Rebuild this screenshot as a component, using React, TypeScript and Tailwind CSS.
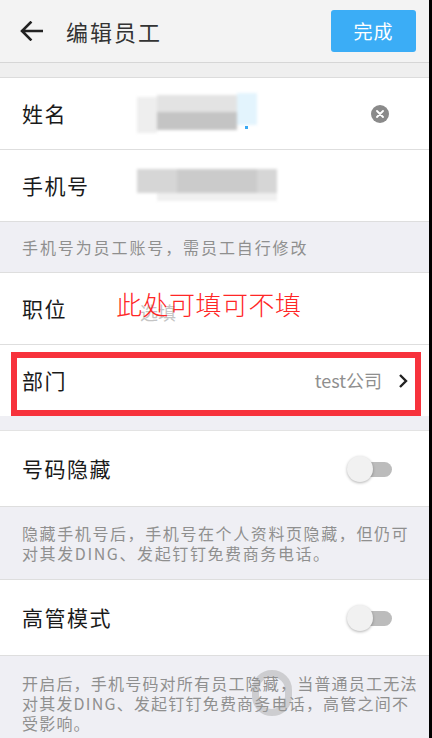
import React from "react";

const font = { fontFamily: '"Noto Sans CJK SC", "Noto Sans", sans-serif' };

function Toggle() {
  return (
    <div className="relative mr-[36px] h-[28px] w-[46px]">
      <div className="absolute left-[14px] top-[7px] h-[15px] w-[31px] rounded-full bg-[#bcbcbc]" />
      <div className="absolute left-0 top-[1px] h-[26px] w-[26px] rounded-full bg-[#f1f1f1] shadow-[0_1px_3px_rgba(0,0,0,0.3)]" />
    </div>
  );
}

export default function App() {
  return (
    <div className="w-[432px] h-[738px] overflow-hidden bg-[#efeff4] border-r-[3px] border-black" style={font}>
      {/* Header */}
      <div className="flex h-[63px] items-center bg-[#f3f3f3] border-b border-[#d6d6d6]">
        <svg className="ml-[20px]" width="23" height="20" viewBox="0 0 23 20" fill="none">
          <path d="M22 10H2.5M10.5 1.5L2 10l8.5 8.5" stroke="#222" strokeWidth="2.6" strokeLinecap="square" />
        </svg>
        <div className="ml-[23px] text-[22px] tracking-[2px] text-[#333]">编辑员工</div>
        <div className="ml-auto mr-[13px] flex h-[42px] w-[85px] items-center justify-center rounded-[3px] bg-[#3badf6] text-[19px] tracking-[1px] text-white">
          完成
        </div>
      </div>
      <div className="h-[15px] bg-[#efefef] border-b border-[#dcdcdc]" />

      {/* Name */}
      <div className="flex h-[72px] items-center bg-white border-b border-[#dedede]">
        <div className="w-[137px] pl-[22px] text-[21px] tracking-[1.5px] text-[#1a1a1a]">姓名</div>
        <div className="relative h-[38px] w-[120px] blur-[1.5px]">
          <div className="absolute left-0 top-[2px] h-[36px] w-[20px] bg-[#eeeeee]" />
          <div className="absolute left-[20px] top-[0px] h-[18px] w-[80px] bg-[#e3e3e3]" />
          <div className="absolute left-[20px] top-[17px] h-[18px] w-[80px] bg-[#c4c4c4]" />
          <div className="absolute left-[100px] top-[-2px] h-[32px] w-[20px] bg-[#e3f4fd]" />
        </div>
        <div className="relative -ml-[12px] mt-[28px] h-[3px] w-[3px] bg-[#39a9f4]" />
        <div className="ml-auto mr-[40px] flex h-[18px] w-[18px] items-center justify-center rounded-full bg-[#8a8a8a]">
          <svg width="8" height="8" viewBox="0 0 8 8">
            <path d="M1 1l6 6M7 1L1 7" stroke="white" strokeWidth="1.8" strokeLinecap="round" />
          </svg>
        </div>
      </div>

      {/* Phone */}
      <div className="flex h-[72px] items-center bg-white border-b border-[#dedede]">
        <div className="w-[137px] pl-[22px] text-[21px] tracking-[1.5px] text-[#1a1a1a]">手机号</div>
        <div className="relative h-[34px] w-[140px] blur-[1.5px]">
          <div className="absolute left-0 top-0 h-[24px] w-[140px] bg-[#d6d6d6]" />
          <div className="absolute left-[40px] top-0 h-[24px] w-[80px] bg-[#cbcbcb]" />
          <div className="absolute left-[20px] top-[24px] h-[8px] w-[120px] bg-[#f0f0f0]" />
        </div>
      </div>

      {/* Hint 1 */}
      <div className="flex h-[51px] items-center pl-[22px] text-[16px] tracking-[1.9px] text-[#8f8f8f] bg-[#efeff4] border-b border-[#dedede]">
        手机号为员工账号，需员工自行修改
      </div>

      {/* Position */}
      <div className="relative flex h-[72px] items-center bg-white border-b border-[#dedede]">
        <div className="w-[118px] pl-[22px] text-[21px] tracking-[1.5px] text-[#1a1a1a]">职位</div>
        <div className="ml-[22px] mt-[8px] text-[18px] text-[#c4c4c4]">选填</div>
        <div className="absolute left-[116px] top-[13px] text-[26px] leading-[36px] tracking-[0.5px] text-[#ff2626] font-light">
          此处可填可不填
        </div>
      </div>

      {/* Department */}
      <div className="relative flex h-[71px] items-center bg-white">
        <div className="pl-[22px] text-[21px] tracking-[1.5px] text-[#1a1a1a]">部门</div>
        <div className="ml-auto text-[18px] text-[#8f8f8f]">test公司</div>
        <svg className="ml-[16px] mr-[21px]" width="10" height="16" viewBox="0 0 10 16" fill="none">
          <path d="M2 2l6 6-6 6" stroke="#222" strokeWidth="2.4" />
        </svg>
        <div className="absolute left-[11px] right-[8px] top-[7px] bottom-[0px] border-[6px] border-[#f7323c]" />
      </div>

      <div className="h-[15px] bg-[#efeff4] border-b border-[#e3e3e3]" />

      {/* Number hidden */}
      <div className="flex h-[76px] items-center bg-white border-b border-[#dedede]">
        <div className="pl-[22px] text-[21px] tracking-[1.5px] text-[#1a1a1a]">号码隐藏</div>
        <div className="ml-auto">
          <Toggle />
        </div>
      </div>

      <div className="bg-[#efeff4] pl-[22px] pt-[16px] pb-[16px] text-[16px] leading-[20px] tracking-[1.6px] text-[#8f8f8f] whitespace-nowrap border-b border-[#dedede]">
        隐藏手机号后，手机号在个人资料页隐藏，但仍可
        <br />
        对其发DING、发起钉钉免费商务电话。
      </div>

      {/* Executive mode */}
      <div className="flex h-[76px] items-center bg-white border-b border-[#dedede]">
        <div className="pl-[22px] text-[21px] tracking-[1.5px] text-[#1a1a1a]">高管模式</div>
        <div className="ml-auto">
          <Toggle />
        </div>
      </div>

      <div className="relative bg-[#efeff4] pl-[22px] pt-[17px] pb-[16px] text-[16px] leading-[20px] tracking-[1.2px] text-[#8f8f8f] whitespace-nowrap">
        开启后，手机号码对所有员工隐藏，当普通员工无法
        <br />
        对其发DING、发起钉钉免费商务电话，高管之间不
        <br />
        受影响。
        <div className="absolute left-[252px] top-[14px] h-[46px] w-[40px] rounded-full border-[7px] border-[#9a9a9a] opacity-40" />
      </div>
    </div>
  );
}
